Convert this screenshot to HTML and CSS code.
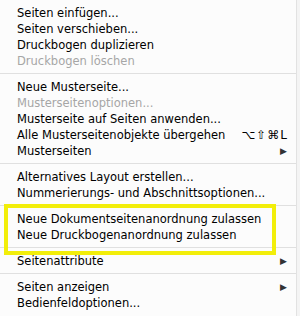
FILE: index.html
```html
<!DOCTYPE html>
<html lang="de">
<head>
  <meta charset="UTF-8">
  <title>Seiten-Menü</title>
  <link rel="stylesheet" href="styles.css">
</head>
<body>
  <div class="menu">
    <div class="item">Seiten einfügen...</div>
    <div class="item">Seiten verschieben...</div>
    <div class="item">Druckbogen duplizieren</div>
    <div class="item disabled">Druckbogen löschen</div>
    <div class="sep"></div>
    <div class="item">Neue Musterseite...</div>
    <div class="item disabled">Musterseitenoptionen...</div>
    <div class="item">Musterseite auf Seiten anwenden...</div>
    <div class="item">Alle Musterseitenobjekte übergehen <span class="shortcut">⌥⇧⌘L</span></div>
    <div class="item">Musterseiten <span class="arrow">▶</span></div>
    <div class="sep"></div>
    <div class="item">Alternatives Layout erstellen...</div>
    <div class="item">Nummerierungs- und Abschnittsoptionen...</div>
    <div class="sep"></div>
    <div class="highlight">
      <div class="item">Neue Dokumentseitenanordnung zulassen</div>
      <div class="item">Neue Druckbogenanordnung zulassen</div>
    </div>
    <div class="sep"></div>
    <div class="item">Seitenattribute <span class="arrow">▶</span></div>
    <div class="sep"></div>
    <div class="item">Seiten anzeigen <span class="arrow">▶</span></div>
    <div class="item">Bedienfeldoptionen...</div>
  </div>
</body>
</html>
```

FILE: styles.css
```css
* {
  margin: 0;
  padding: 0;
  box-sizing: border-box;
}

body {
  width: 300px;
  height: 316px;
  overflow: hidden;
  background: #f4f4f4;
  font-family: "DejaVu Sans", sans-serif;
  font-size: 11.5px;
  color: #000;
}

.menu {
  width: 297px;
  height: 316px;
  padding-top: 5px;
  background: #fcfcfc;
  border-right: 1px solid #e2e2e2;
}

.item {
  display: flex;
  align-items: center;
  justify-content: space-between;
  height: 16px;
  padding: 0 9px 0 17px;
  white-space: nowrap;
}

.disabled {
  color: #a6a6a6;
}

.shortcut {
  font-size: 12px;
  letter-spacing: 1px;
  margin-right: -1px;
}

.arrow {
  font-size: 9px;
  color: #333;
}

.sep {
  height: 1px;
  margin: 4px 0 5px;
  background: #e0e0e0;
}

.highlight {
  position: relative;
}

.highlight::after {
  content: "";
  position: absolute;
  left: 4px;
  top: -7px;
  width: 272px;
  bottom: -12px;
  box-sizing: border-box;
  border: 4px solid #f2ee0a;
}
```
